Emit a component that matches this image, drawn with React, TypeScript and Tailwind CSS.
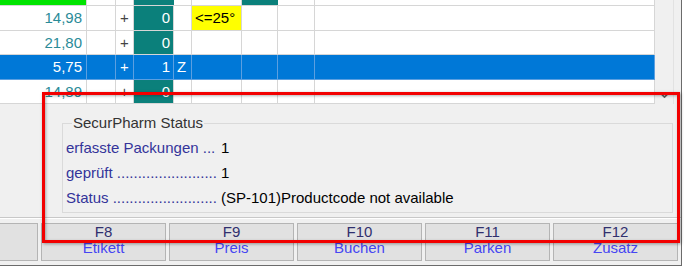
import { ChevronDown } from "lucide-react";

type Row = {
  price: string;
  qty: string;
  flag?: string;
  note?: string;
  selected?: boolean;
  h: string;
};

const rows: Row[] = [
  { price: "14,98", qty: "0", note: "<=25°", h: "h-[25px]" },
  { price: "21,80", qty: "0", h: "h-[24px]" },
  { price: "5,75", qty: "1", flag: "Z", selected: true, h: "h-[25px]" },
  { price: "14,89", qty: "0", h: "h-[24px]" },
];

const keys = [
  { key: "F8", label: "Etikett" },
  { key: "F9", label: "Preis" },
  { key: "F10", label: "Buchen" },
  { key: "F11", label: "Parken" },
  { key: "F12", label: "Zusatz" },
];

function TableRow({ row }: { row: Row }) {
  const sel = row.selected;
  const line = sel ? "border-[#5c9fe0]" : "border-[#d6d6d6]";
  return (
    <div className={`flex ${row.h} border-b ${line} ${sel ? "bg-[#0078d7] text-white" : "bg-white"}`}>
      <div className={`w-[87px] border-r ${line} flex items-center justify-end pr-[4px] ${sel ? "" : "text-[#2a8b98]"}`}>
        {row.price}
      </div>
      <div className={`w-[29px] border-r ${line}`} />
      <div className={`w-[18px] border-r ${line} flex items-center justify-center ${sel ? "" : "text-[#444]"}`}>+</div>
      <div className={`w-[40px] border-r ${line} flex items-center justify-end pr-[3px] text-white ${sel ? "" : "bg-[#0b807b]"}`}>
        {row.qty}
      </div>
      <div className={`w-[18px] border-r ${line} flex items-center pl-[3px]`}>{row.flag}</div>
      <div className={`w-[50px] border-r ${line} flex`}>
        {row.note && (
          <div className="flex-1 bg-[#ffff00] text-black flex items-center pl-[3px]">{row.note}</div>
        )}
      </div>
      <div className={`w-[36px] border-r ${line}`} />
      <div className={`w-[37px] border-r ${line}`} />
      <div className={`flex-1 border-r ${line}`} />
    </div>
  );
}

function InfoLine({ label, value }: { label: string; value: string }) {
  return (
    <div className="flex h-[25px] items-center">
      <div className="w-[155px] whitespace-nowrap overflow-hidden text-[#34349a]">{label}</div>
      <div className="text-black whitespace-nowrap">{value}</div>
    </div>
  );
}

export default function App() {
  return (
    <div className="relative w-[684px] h-[268px] overflow-hidden bg-white font-['Liberation_Sans',Arial,sans-serif] text-[15px] leading-[18px]">
      <div className="w-[682px] h-[266px] flex flex-col bg-[#f0f0f0] border-r border-b border-[#6b6b6b]">
        <div className="flex h-[104px]">
          <div className="w-[655px] bg-white border-b border-[#c4c4c4]">
            <div className="flex h-[6px] border-b border-[#d6d6d6]">
              <div className="w-[87px] bg-[#00e400] border-r border-[#d6d6d6]" />
              <div className="w-[29px] border-r border-[#d6d6d6]" />
              <div className="w-[18px] border-r border-[#d6d6d6]" />
              <div className="w-[40px] bg-[#0b807b]" />
              <div className="w-[18px] border-r border-[#d6d6d6]" />
              <div className="w-[50px] border-r border-[#d6d6d6]" />
              <div className="w-[36px] bg-[#0b807b]" />
              <div className="w-[37px] border-r border-[#d6d6d6]" />
              <div className="flex-1 border-r border-[#d6d6d6]" />
            </div>
            {rows.map((row) => (
              <TableRow key={row.price + row.qty} row={row} />
            ))}
          </div>
          <div className="w-[19px] bg-[#f0f0f0] border-r border-[#e2e2e2] flex flex-col justify-end items-center pb-[2px]">
            <ChevronDown className="w-[13px] h-[13px] text-[#606060]" strokeWidth={3} />
          </div>
        </div>

        <div className="h-[114px] pt-[10px] pl-[62px] pr-[8px] border-b border-[#c8c8c8]">
          <fieldset className="h-[99px] border border-[#dadada] pl-[3px] pt-[3px]">
            <legend className="ml-[6px] px-[1px] text-[#333]">SecurPharm Status</legend>
            <InfoLine label="erfasste Packungen ..." value="1" />
            <InfoLine label="geprüft ........................" value="1" />
            <InfoLine label="Status ........................." value="(SP-101)Productcode not available" />
          </fieldset>
        </div>

        <div className="flex gap-[3px] pt-[4px] border-t border-white">
          <div className="w-[38px] h-[38px] bg-[#e1e1e1] border border-[#b4b4b4] border-l-0" />
          {keys.map((k) => (
            <div
              key={k.key}
              className="w-[125px] h-[38px] bg-[#e1e1e1] border border-[#b4b4b4] flex flex-col items-center leading-[16px]"
            >
              <span className="text-[#30306e]">{k.key}</span>
              <span className="text-[#4646f2]">{k.label}</span>
            </div>
          ))}
        </div>
      </div>

      <div className="absolute left-[42px] top-[92px] w-[638px] h-[151px] border-[3px] border-[#f20000] shadow-[1px_1px_3px_rgba(0,0,0,0.35),inset_1px_1px_3px_rgba(0,0,0,0.3)]" />
    </div>
  );
}
